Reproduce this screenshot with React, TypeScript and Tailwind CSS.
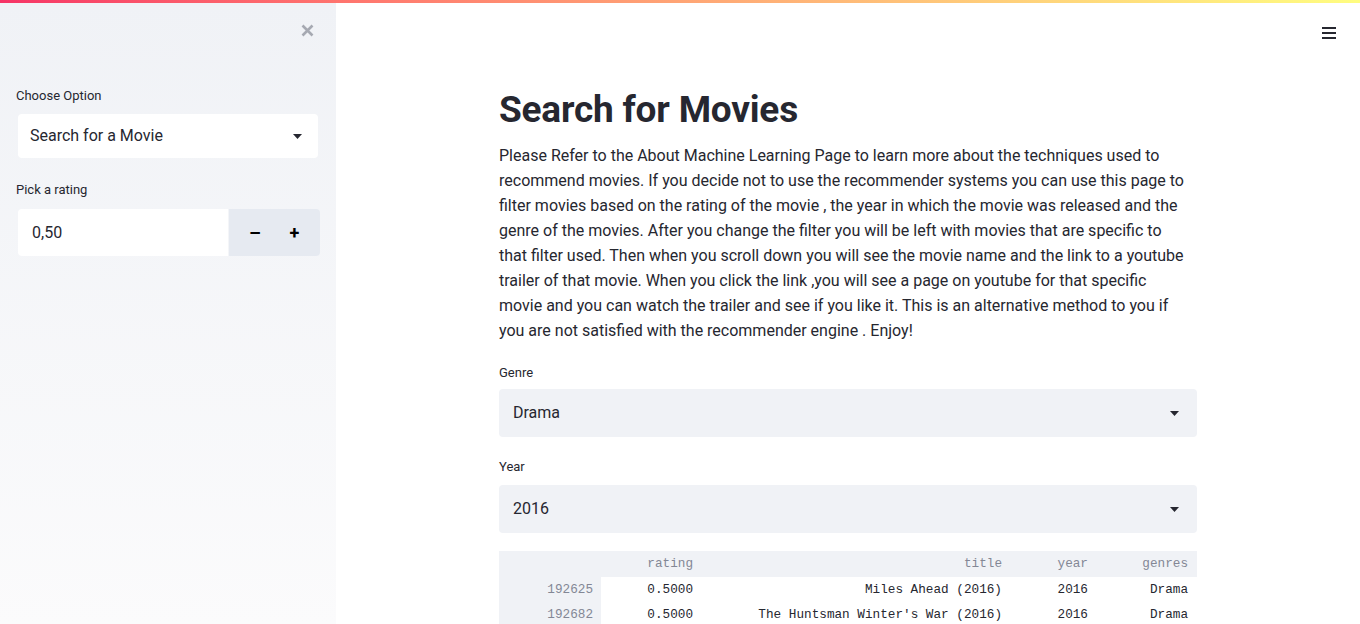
const PARAGRAPH = [
  "Please Refer to the About Machine Learning Page to learn more about the techniques used to",
  "recommend movies. If you decide not to use the recommender systems you can use this page to",
  "filter movies based on the rating of the movie , the year in which the movie was released and the",
  "genre of the movies. After you change the filter you will be left with movies that are specific to",
  "that filter used. Then when you scroll down you will see the movie name and the link to a youtube",
  "trailer of that movie. When you click the link ,you will see a page on youtube for that specific",
  "movie and you can watch the trailer and see if you like it. This is an alternative method to you if",
  "you are not satisfied with the recommender engine . Enjoy!",
];

const ROWS = [
  { idx: "192625", rating: "0.5000", title: "Miles Ahead (2016)", year: "2016", genres: "Drama" },
  { idx: "192682", rating: "0.5000", title: "The Huntsman Winter's War (2016)", year: "2016", genres: "Drama" },
];

const SANS = "font-['Roboto','Liberation_Sans',sans-serif]";
const MONO = "font-['Liberation_Mono','DejaVu_Sans_Mono',monospace]";

function Caret() {
  return (
    <svg width="9" height="5" viewBox="0 0 9 5" className="shrink-0">
      <path d="M0 0h9L4.5 5z" fill="#262730" />
    </svg>
  );
}

function Select({ value, bg, height }: { value: string; bg: string; height: string }) {
  return (
    <div className={`flex items-center justify-between rounded ${bg} ${height} pl-[14px] pr-[18px]`}>
      <span className="text-[16px] text-[#262730]">{value}</span>
      <Caret />
    </div>
  );
}

export default function App() {
  return (
    <div className={`w-[1360px] h-[624px] overflow-hidden bg-white ${SANS} text-[#262730]`}>
      <div className="h-[3px] bg-gradient-to-r from-[#f63366] to-[#fffd80]" />
      <div className="flex h-[621px]">
        {/* sidebar */}
        <aside className="w-[336px] shrink-0 bg-gradient-to-b from-[#f0f2f6] to-[#fbfbfc] px-[18px]">
          <div className="flex justify-end pt-[21px] pr-[4px] h-[80px]">
            <svg width="13" height="13" viewBox="0 0 13 13">
              <path d="M1.5 1.5l10 10M11.5 1.5l-10 10" stroke="#a6a9b2" strokeWidth="2.6" />
            </svg>
          </div>
          <div className="text-[13px] leading-[18px] -ml-[2px] mt-[4px]">Choose Option</div>
          <div className="mt-[9px]">
            <div className="flex items-center justify-between rounded bg-white h-[44px] pl-[12px] pr-[16px]">
              <span className="text-[16px] text-[#262730]">Search for a Movie</span>
              <Caret />
            </div>
          </div>
          <div className="text-[13px] leading-[18px] -ml-[2px] mt-[23px]">Pick a rating</div>
          <div className="mt-[10px] flex h-[47px] rounded overflow-hidden w-[302px]">
            <div className="flex-1 bg-white flex items-center pl-[14px] text-[16px] mr-[1px]">0,50</div>
            <div className="w-[91px] bg-[#e6eaf1] flex items-center justify-around px-[6px] text-[18px] font-bold text-black">
              <span className="scale-x-125">−</span>
              <span>+</span>
            </div>
          </div>
        </aside>

        {/* main */}
        <main className="flex-1 relative">
          <div className="absolute right-[24px] top-[24px] flex flex-col gap-[3px]">
            <span className="block w-[14px] h-[2px] bg-[#262730]" />
            <span className="block w-[14px] h-[2px] bg-[#262730]" />
            <span className="block w-[14px] h-[2px] bg-[#262730]" />
          </div>
          <div className="w-[698px] mx-auto pt-[83px]">
            <h1 className="text-[37px] leading-[48px] font-bold tracking-[-0.2px]">Search for Movies</h1>
            <div className="mt-[9px] text-[16px] leading-[25px] text-[#262730]">
              {PARAGRAPH.map((line) => (
                <div key={line} className="whitespace-nowrap">{line}</div>
              ))}
            </div>

            <div className="mt-[21px] text-[13px] leading-[18px]">Genre</div>
            <div className="mt-[7px]">
              <Select value="Drama" bg="bg-[#f0f2f6]" height="h-[48px]" />
            </div>

            <div className="mt-[21px] text-[13px] leading-[18px]">Year</div>
            <div className="mt-[9px]">
              <Select value="2016" bg="bg-[#f0f2f6]" height="h-[48px]" />
            </div>

            <table className={`mt-[18px] w-full ${MONO} text-[12.7px] border-collapse`}>
              <thead>
                <tr className="bg-[#f0f2f6] text-[#838795] h-[26px]">
                  <th className="w-[102px] font-normal" />
                  <th className="font-normal text-right pr-[8px] w-[100px]">rating</th>
                  <th className="font-normal text-right pr-[8px]">title</th>
                  <th className="font-normal text-right pr-[8px] w-[86px]">year</th>
                  <th className="font-normal text-right pr-[9px] w-[101px]">genres</th>
                </tr>
              </thead>
              <tbody>
                {ROWS.map((r) => (
                  <tr key={r.idx} className="h-[25px]">
                    <td className="bg-[#f0f2f6] text-[#838795] text-right pr-[8px]">{r.idx}</td>
                    <td className="text-right pr-[8px]">{r.rating}</td>
                    <td className="text-right pr-[8px]">{r.title}</td>
                    <td className="text-right pr-[8px]">{r.year}</td>
                    <td className="text-right pr-[9px]">{r.genres}</td>
                  </tr>
                ))}
              </tbody>
            </table>
          </div>
        </main>
      </div>
    </div>
  );
}
